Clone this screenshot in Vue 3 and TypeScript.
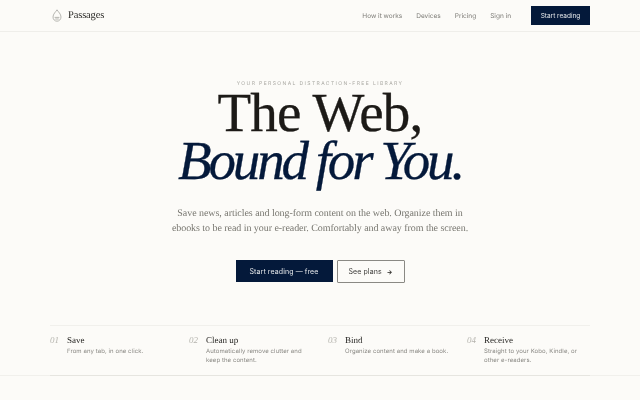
<script setup lang="ts">
const nav: string[] = ['How it works', 'Devices', 'Pricing', 'Sign in']
const steps = [
  { n: '01', t: 'Save', d: 'From any tab, in one click.' },
  { n: '02', t: 'Clean up', d: 'Automatically remove clutter and keep the content.' },
  { n: '03', t: 'Bind', d: 'Organize content and make a book.' },
  { n: '04', t: 'Receive', d: 'Straight to your Kobo, Kindle, or other e-readers.' },
]
</script>

<template>
  <div class="page">
    <header class="top">
      <div class="brand">
        <svg class="logo" width="10" height="13" viewBox="0 0 10 13" fill="none" stroke="#a5a5a0" stroke-width="0.8">
          <path d="M5 .8C3.8 2.8 1 5 1 8 1 10.4 2.8 12.2 5 12.2S9 10.4 9 8C9 5 6.2 2.8 5 .8Z" />
          <path d="M2.6 8.4H7.4M3.2 10H6.8" />
        </svg>
        <span class="name">Passages</span>
      </div>
      <nav class="links">
        <a v-for="l in nav" :key="l">{{ l }}</a>
        <button class="cta small">Start reading</button>
      </nav>
    </header>

    <main class="hero">
      <p class="eyebrow">YOUR PERSONAL DISTRACTION-FREE LIBRARY</p>
      <h1>The Web,<br /><em>Bound for You.</em></h1>
      <p class="lead">Save news, articles and long-form content on the web. Organize them in<br />ebooks to be read in your e-reader. Comfortably and away from the screen.</p>
      <div class="actions">
        <button class="cta big">Start reading — free</button>
        <button class="ghost">See plans<span class="arrow">→</span></button>
      </div>
    </main>

    <div class="band">
      <section class="steps">
        <div v-for="s in steps" :key="s.n" class="step">
          <span class="num">{{ s.n }}</span>
          <div>
            <div class="title">{{ s.t }}</div>
            <div class="desc">{{ s.d }}</div>
          </div>
        </div>
      </section>
    </div>
  </div>
</template>

<style>
html, body { margin: 0; background: #fcfbf8; }
</style>

<style scoped>
.page {
  width: 640px;
  height: 400px;
  overflow: hidden;
  background: #fcfbf8;
  font-family: Inter, "Liberation Sans", sans-serif;
  text-rendering: geometricPrecision;
  display: flex;
  flex-direction: column;
}
.top {
  flex: none;
  height: 31px;
  border-bottom: 1px solid #efeeea;
  padding: 0 50px 0 52px;
  display: flex;
  align-items: center;
  justify-content: space-between;
  will-change: transform;
}
.brand { display: flex; align-items: center; gap: 6px; }
.logo { display: block; }
.name {
  font-family: "Liberation Serif", serif;
  font-size: 10.5px;
  letter-spacing: -0.15px;
  color: #2a2926;
}
.links { display: flex; align-items: center; gap: 14px; font-size: 6.5px; color: #7c7b76; }
.cta {
  background: #04193a;
  color: #e6e8ea;
  border: 0;
  font-family: inherit;
  padding: 0;
  display: block;
}
.small { width: 59px; height: 19px; font-size: 6.5px; margin-left: 6px; }
.hero {
  flex: 1;
  display: flex;
  flex-direction: column;
  align-items: center;
  padding-top: 49px;
  will-change: transform;
}
.eyebrow {
  margin: 0;
  font-size: 5px;
  line-height: 7px;
  letter-spacing: 1.4px;
  color: #a9a8a2;
}
h1 {
  margin: 1px 0 0;
  font-family: "Liberation Serif", serif;
  font-weight: 400;
  font-size: 55px;
  line-height: 48px;
  letter-spacing: -0.8px;
  text-align: center;
  color: #1c1a17;
  -webkit-text-stroke: 0.3px currentColor;
}
em {
  color: #04193a;
  font-style: italic;
  letter-spacing: -3.1px;
  word-spacing: -1px;
}
.lead {
  margin: 22px 0 0;
  font-family: "Liberation Serif", serif;
  font-size: 10px;
  line-height: 14.5px;
  letter-spacing: -0.05px;
  text-align: center;
  color: #77766f;
}
.actions { display: flex; align-items: flex-start; gap: 4px; margin-top: 24px; }
.big { width: 97px; height: 22px; font-size: 7px; letter-spacing: 0.1px; }
.ghost {
  width: 68px;
  height: 23px;
  box-sizing: border-box;
  background: transparent;
  border: 1px solid #8a8984;
  border-radius: 1px;
  padding: 0;
  font-family: inherit;
  font-size: 7px;
  letter-spacing: 0.1px;
  color: #3c3b38;
}
.arrow {
  margin-left: 5px;
  font-size: 6px;
  font-weight: 700;
  color: #1c1a17;
}
.band {
  flex: none;
  height: 50px;
  margin-bottom: 24px;
  border-bottom: 1px solid #f1f0ec;
  padding: 0 50px;
  will-change: transform;
}
.steps {
  height: 49px;
  border-top: 1px solid #f1f0ec;
  border-bottom: 1px solid #e6e5e0;
  display: grid;
  grid-template-columns: repeat(4, 139px);
}
.step { display: flex; gap: 8px; padding-top: 9px; }
.num {
  width: 9px;
  font-family: "Liberation Serif", serif;
  font-style: italic;
  font-size: 9px;
  line-height: 11px;
  color: #b5b4ae;
}
.title {
  font-family: "Liberation Serif", serif;
  font-size: 9px;
  line-height: 11px;
  color: #2a2926;
}
.desc {
  margin-top: 1px;
  width: 108px;
  font-size: 6px;
  line-height: 9px;
  letter-spacing: 0.08px;
  color: #8a8984;
}
</style>
